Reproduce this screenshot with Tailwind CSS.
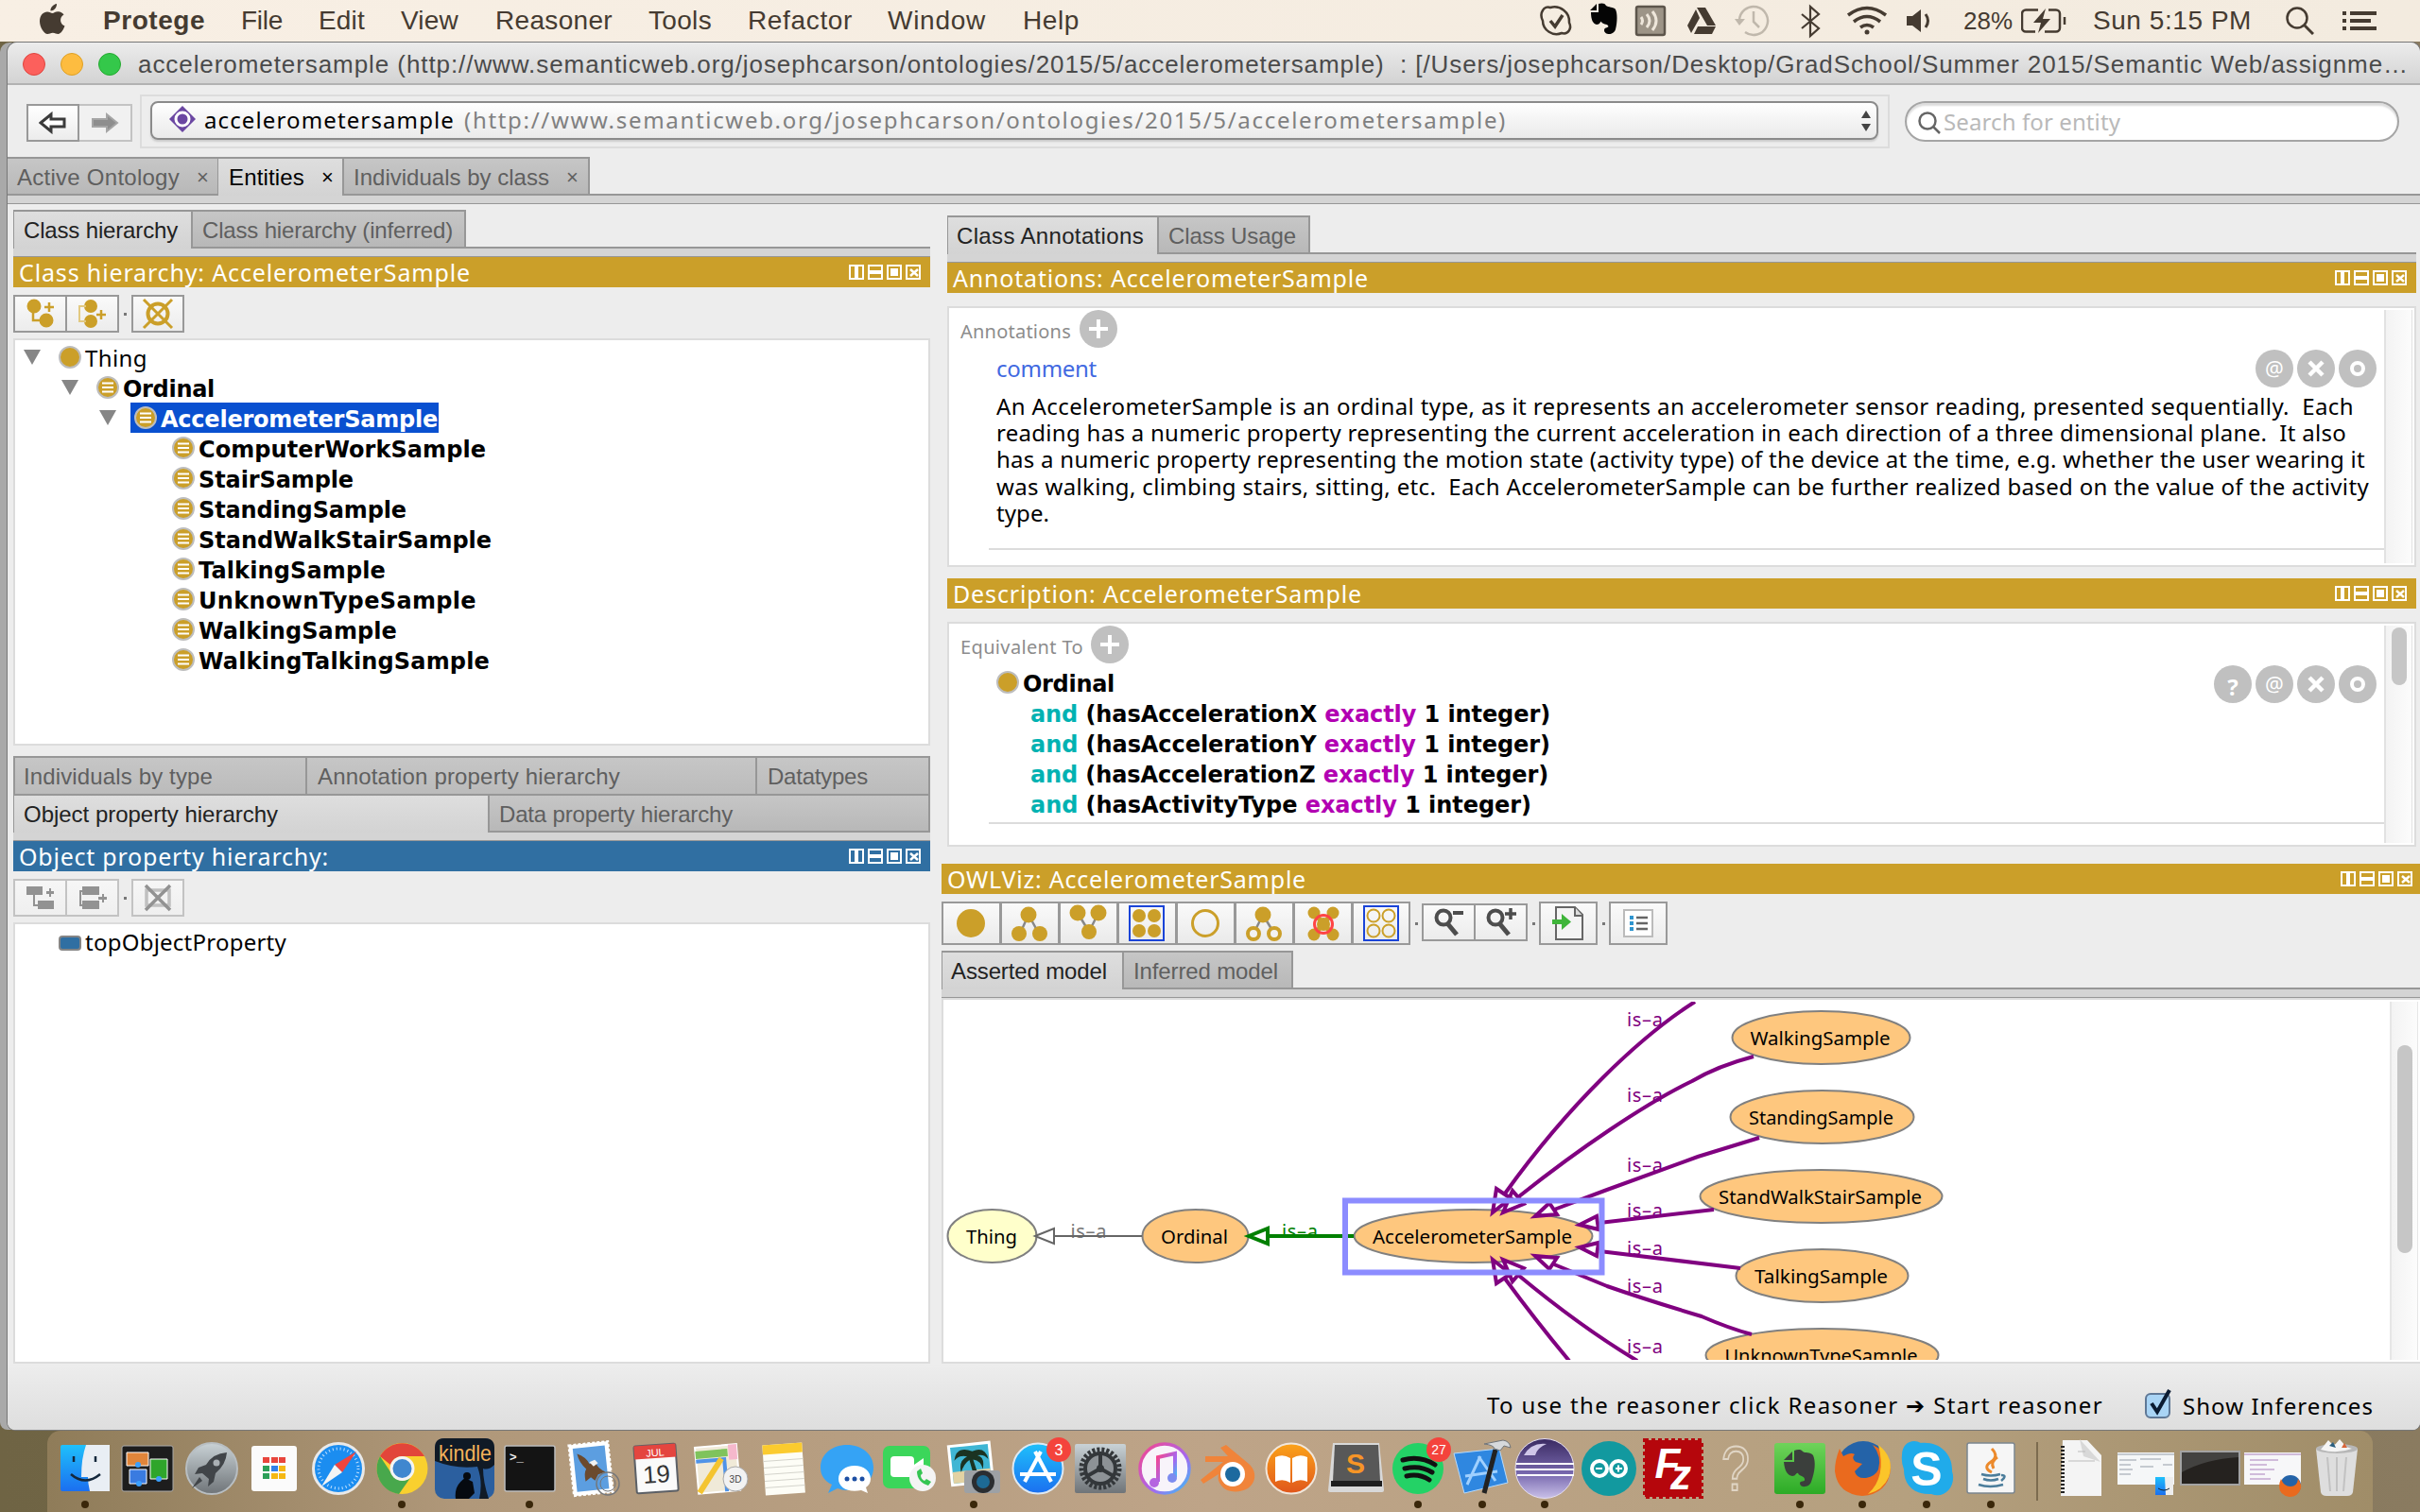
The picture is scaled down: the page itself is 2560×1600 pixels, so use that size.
<!DOCTYPE html>
<html lang="en">
<head>
<meta charset="utf-8">
<title>Protege</title>
<script src="https://cdn.jsdelivr.net/npm/@tailwindcss/browser@4"></script>
</head>
<body class="w-[2560px] h-[1600px] overflow-hidden bg-[#8d7f62] font-['Noto_Sans',sans-serif] text-[24px] text-black [&_span]:whitespace-pre">
<svg class="hidden">
  <symbol id="cls" viewBox="0 0 24 24"><circle cx="12" cy="12" r="11" fill="#cb9f29" stroke="#bdbdbd" stroke-width="2"/></symbol>
  <symbol id="def" viewBox="0 0 24 24"><circle cx="12" cy="12" r="11" fill="#cb9f29" stroke="#bdbdbd" stroke-width="2"/><path d="M6 7.500h12M6 12h12M6 16.500h12" stroke="#fff" stroke-width="2"/></symbol>
  <symbol id="arr" viewBox="0 0 18 16"><path d="M0 0h18L9 16z" fill="#868686"/></symbol>
  <symbol id="panelbtns" viewBox="0 0 76 16"><g fill="none" stroke="#fff" stroke-width="2"><path d="M1 1h14v14H1zM21 1h14v14H21zM41 1h14v14H41zM61 1h14v14H61z"/><path d="M8 1v14M21 8h14" stroke-width="4"/><path d="M65 5l8 7M73 5l-8 7" stroke-width="2.500"/></g><path d="M44 4h8v8h-8z" fill="#fff"/></symbol>
  <symbol id="plus" viewBox="0 0 40 40"><circle cx="20" cy="20" r="20" fill="#c0c0c0"/><path d="M20 10v20M10 20h20" stroke="#fff" stroke-width="4"/></symbol>
  <symbol id="xbtn" viewBox="0 0 40 40"><circle cx="20" cy="20" r="20" fill="#c0c0c0"/><path d="M13 13l14 14M27 13L13 27" stroke="#fff" stroke-width="4.500"/></symbol>
  <symbol id="obtn" viewBox="0 0 40 40"><circle cx="20" cy="20" r="20" fill="#c0c0c0"/><circle cx="20" cy="20" r="6" fill="none" stroke="#fff" stroke-width="4"/></symbol>
</svg>
<div class="flex flex-col w-[2560px] h-[1600px] bg-gradient-to-r from-[#6f6444] to-[#8a7b60]">

<!-- menu bar -->
<header class="h-[44px] shrink-0 flex items-center bg-gradient-to-r from-[#f8efe4] to-[#f3ebdf] text-[#453b31] font-['Liberation_Sans',sans-serif] text-[28px] leading-[44px]">
  <svg class="ml-[41px] w-[28px] h-[34px] -mt-[3px]" viewBox="0 0 28 34" fill="#453b31"><path d="M19 0c.3 4-3 7.500-6.500 7.500C12 4 15.500.5 19 0zM14.500 10c1.500 0 3-1.700 6-1.700 2.500 0 4.800 1.300 6 3.300-5 3-4.300 10 1 12-1.200 3.500-4 8.400-7 8.400-2.200 0-3-1.300-5.600-1.300-2.600 0-3.500 1.300-5.600 1.300C5.500 32 1 24.500 1 18.500c0-6.500 4-10 8-10 2.500 0 4 1.500 5.500 1.500z"/></svg>
  <div class="w-[186px] pl-[40px] font-bold"><span data-w="108">Protege</span></div>
  <div class="w-[82px]"><span data-w="44">File</span></div>
  <div class="w-[87px]"><span data-w="49">Edit</span></div>
  <div class="w-[100px]"><span data-w="61">View</span></div>
  <div class="w-[162px]"><span data-w="124">Reasoner</span></div>
  <div class="w-[105px]"><span data-w="67">Tools</span></div>
  <div class="w-[148px]"><span data-w="111">Refactor</span></div>
  <div class="w-[143px]"><span data-w="104">Window</span></div>
  <div class="w-[538px]"><span data-w="60">Help</span></div>
  <svg class="w-[430px] h-[44px]" viewBox="1620 0 430 44" fill="none" stroke="#453b31" stroke-width="2.500">
    <path d="M1632 11a6 6 0 0 1 8-3c10-3 21 5 20 16 3 6-1 13-8 11-9 4-20-3-20-13-2-4-2-8 0-11z"/><path d="M1640 22l5 6 8-12" stroke-width="3.500"/>
    <g fill="#050505" stroke="none"><path d="M1689 4l-7 7h7zM1691 4v9h-8c0 8 2 12 6 13 4 0 4-4 5-3 1 3 6 2 7 4 2 3-4 1-4 5 0 5 10 6 12-1 2-8 2-17 0-21-2-3-8-2-10-4-1-3-5-3-8-2z"/></g>
    <rect x="1731" y="7" width="30" height="30" rx="2" fill="#9d9487" stroke="#5d554b"/><g stroke="#eee6da" stroke-width="3"><path d="M1736 18q3 4 0 8M1742 15q6 7 0 14M1748 12q8 10 0 20"/></g>
    <g fill="#453b31" stroke="none"><path d="M1795 8h9l11 19h-9zM1794 10l4 9-9 16-4-8zM1796 28h19l-4 8h-19z"/></g>
    <g stroke="#c0b8ac"><path d="M1840 22a15 15 0 1 1 6 12M1855 12v11l6 6"/><path d="M1835 20h11l-6 7z" fill="#c0b8ac" stroke="none"/></g>
    <path d="M1906 15l18 15-9 8V7l9 8-18 15" stroke-width="2.200"/>
    <g stroke-width="3.500"><path d="M1955 16q20-15 40 0M1961 23q14-11 28 0M1968 29q7-5 14 0"/></g><circle cx="1975" cy="34" r="2.500" fill="#453b31" stroke="none"/>
    <path d="M2017 17h6l9-7v24l-9-7h-6z" fill="#453b31" stroke="none"/><path d="M2037 15q5 7 0 14" stroke-width="3"/>
  </svg>
  <div class="ml-[27px] w-[61px] text-[26px]"><span data-w="52">28%</span></div>
  <svg class="w-[48px] h-[26px]" viewBox="0 0 48 26" fill="none" stroke="#453b31" stroke-width="2.500"><path d="M18 1.500H5a4 4 0 0 0-4 4v15a4 4 0 0 0 4 4h10M29 1.500h8a4 4 0 0 1 4 4v15a4 4 0 0 1-4 4H25"/><path d="M26 0L13 15h8l-3 11 13-15h-8z" fill="#453b31" stroke="none"/><path d="M46 9v8"/></svg>
  <div class="ml-[28px] w-[204px]"><span data-w="168">Sun 5:15 PM</span></div>
  <svg class="w-[30px] h-[30px]" viewBox="0 0 30 30" fill="none" stroke="#453b31" stroke-width="2.500"><circle cx="12" cy="12" r="10.500"/><path d="M19 19l10 10" stroke-width="3"/></svg>
  <svg class="ml-[30px] w-[36px] h-[22px]" viewBox="0 0 36 22" fill="#453b31"><path d="M0 1h4v4H0zM8 1h28v4H8zM0 9h4v4H0zM8 9h22v4H8zM0 17h4v4H0zM8 17h28v4H8z"/></svg>
</header>

<!-- application window -->
<main class="ml-[8px] mt-px w-[2552px] h-[1468px] shrink-0 flex flex-col rounded-t-[10px] rounded-b-[8px] overflow-hidden bg-[#ededed] shadow-[0_0_0_1px_#777,-8px_0_0_#a9a9a9]">
  <div class="h-[45px] shrink-0 flex items-center bg-gradient-to-b from-[#ececec] to-[#d3d3d3] border-b-2 border-[#b2b2b2] font-['Liberation_Sans',sans-serif] text-[26px] text-[#4a4a4a]">
    <div class="ml-[16px] flex gap-[16px] mt-[2px]"><div class="size-[24px] rounded-full bg-[#fc605c] border border-[#e0443e]"></div><div class="size-[24px] rounded-full bg-[#fdbc40] border border-[#dfa023]"></div><div class="size-[24px] rounded-full bg-[#34c84a] border border-[#24a92f]"></div></div>
    <div class="ml-[18px] pt-[4px]"><span data-w="2402">accelerometersample (http://www.semanticweb.org/josephcarson/ontologies/2015/5/accelerometersample)  : [/Users/josephcarson/Desktop/GradSchool/Summer 2015/Semantic Web/assignme…</span></div>
  </div>

  <div class="h-[76px] shrink-0 flex items-start pt-[10px]">
    <div class="ml-[20px] mt-[10px] flex">
      <div class="w-[56px] h-[40px] border-2 border-[#999] bg-gradient-to-b from-[#fff] to-[#ececec] flex items-center justify-center"><svg class="w-[30px] h-[24px]" viewBox="0 0 30 24" fill="#fff" stroke="#3b3b3b" stroke-width="3"><path d="M2 12L13 3v5h14v8H13v5z"/></svg></div>
      <div class="w-[56px] h-[40px] border-2 border-l-0 border-[#c3c3c3] bg-[#f1f1f1] flex items-center justify-center"><svg class="w-[30px] h-[24px]" viewBox="0 0 30 24" fill="#8e8e8e" stroke="#a5a5a5" stroke-width="2"><path d="M28 12L17 3v5H2v8h15v5z"/></svg></div>
    </div>
    <div class="ml-[8px] w-[1851px] h-[57px] border-2 border-[#dcdcdc] pl-[9px] pt-[5px]">
      <div class="w-[1828px] h-[41px] rounded-[8px] border-2 border-[#8b8b8b] bg-gradient-to-b from-white via-[#f4f4f4] to-[#ebebeb] shadow-[0_2px_2px_#ccc] flex items-center leading-[36px]">
        <svg class="ml-[18px] w-[28px] h-[28px] mr-[9px] -mt-[3px]" viewBox="0 0 28 28"><path d="M14 0l14 14-14 14L0 14z" fill="#6b47a2"/><circle cx="14" cy="14" r="7" fill="#6b47a2" stroke="#fff" stroke-width="3"/></svg>
        <div class="w-[275px] -mt-[2px]"><span data-w="265">accelerometersample</span></div>
        <div class="w-[1477px] -mt-[2px] text-[#808080]"><span data-w="1103">(http://www.semanticweb.org/josephcarson/ontologies/2015/5/accelerometersample)</span></div>
        <svg class="w-[12px] h-[22px]" viewBox="0 0 12 22" fill="#444"><path d="M6 0l5 8H1zM6 22l5-8H1z"/></svg>
      </div>
    </div>
    <div class="ml-[16px] mt-[7px] w-[523px] h-[43px] rounded-full border-2 border-[#a5a5a5] bg-white shadow-[inset_0_3px_2px_#ddd] flex items-center text-[#b9b9b9] leading-[39px]">
      <svg class="ml-[12px] mr-[3px] mt-[2px] w-[24px] h-[24px]" viewBox="0 0 24 24" fill="none" stroke="#666" stroke-width="2.500"><circle cx="10" cy="10" r="8.500"/><path d="M16 16l7 7"/></svg><span data-w="187">Search for entity</span>
    </div>
  </div>

  <!-- main tabs -->
  <div class="h-[39px] shrink-0 flex font-['Liberation_Sans',sans-serif] text-[#5f5f5f] leading-[39px]">
    <div class="relative w-[223px] h-[41px] border-2 border-l-0 border-r border-[#979797] bg-gradient-to-b from-[#c6c6c6] to-[#b8b8b8] pl-[10px] flex"><div class="w-[190px]"><span data-w="172">Active Ontology</span></div><span class="text-[22px]">×</span></div>
    <div class="relative w-[131px] h-[41px] border-t-2 border-[#979797] bg-gradient-to-b from-[#dedede] to-[#d3d3d3] text-black pl-[11px] flex"><div class="w-[98px]"><span data-w="80">Entities</span></div><span class="text-[22px]">×</span></div>
    <div class="relative w-[262px] h-[41px] border-2 border-[#979797] bg-gradient-to-b from-[#c6c6c6] to-[#b8b8b8] pl-[10px] flex"><div class="w-[225px]"><span data-w="207">Individuals by class</span></div><span class="text-[22px]">×</span></div>
  </div>
  <div class="h-[11px] shrink-0 border-t-2 border-b border-[#979797] bg-[#d4d4d4]"></div>

  <div class="h-[1227px] shrink-0 flex">
    <!-- left column -->
    <div class="ml-[6px] w-[970px] mt-[6px] flex flex-col">
      <div class="h-[39px] shrink-0 flex font-['Liberation_Sans',sans-serif] text-[#5f5f5f] leading-[39px]">
        <div class="relative w-[188px] h-[41px] border-t-2 border-l border-[#979797] bg-gradient-to-b from-[#dedede] to-[#d3d3d3] text-[#222] pl-[10px]"><span data-w="163">Class hierarchy</span></div>
        <div class="relative w-[291px] h-[41px] border-2 border-[#979797] bg-gradient-to-b from-[#c6c6c6] to-[#b8b8b8] pl-[10px]"><span data-w="265">Class hierarchy (inferred)</span></div>
      </div>
      <div class="h-[11px] shrink-0 border-t-2 border-b border-[#979797] bg-[#d4d4d4]"></div>
      <div class="h-[32px] shrink-0 bg-[#cb9f29] flex items-center justify-between pl-[6px] pr-[10px] text-[25px] text-white leading-[32px]"><span data-w="478">Class hierarchy: AccelerometerSample</span><svg class="w-[76px] h-[16px]"><use href="#panelbtns"/></svg></div>
      <div class="mt-[8px] h-[40px] shrink-0 flex items-center">
        <div class="w-[57px] h-[40px] border-2 border-[#999] bg-gradient-to-b from-[#fafafa] to-[#ececec] flex items-center justify-center"><svg class="w-[32px] h-[32px]" viewBox="0 0 32 32" fill="#cb9f29" stroke="#cb9f29" stroke-width="2"><circle cx="9" cy="8" r="6.500"/><circle cx="22" cy="23" r="6.500"/><path d="M8 8v15h12M25 4v10M20 9h10" fill="none" stroke-width="2.500"/></svg></div>
        <div class="w-[55px] h-[40px] border-2 border-l-0 border-[#999] bg-gradient-to-b from-[#fafafa] to-[#ececec] flex items-center justify-center"><svg class="w-[32px] h-[32px]" viewBox="0 0 32 32" fill="#cb9f29" stroke="#cb9f29" stroke-width="2"><circle cx="14" cy="8" r="6"/><circle cx="14" cy="24" r="6"/><path d="M9 8H2v16h7" fill="none" stroke="#e2c981"/><path d="M25 12v10M20 17h10" fill="none" stroke-width="2.500"/></svg></div>
        <div class="size-[3px] mx-[5px] bg-[#777]"></div>
        <div class="w-[56px] h-[40px] border-2 border-[#999] bg-gradient-to-b from-[#fafafa] to-[#ececec] flex items-center justify-center"><svg class="w-[34px] h-[34px]" viewBox="0 0 34 34" fill="none" stroke="#cb9f29" stroke-width="3"><circle cx="17" cy="17" r="10.500" stroke-width="4"/><path d="M2 2l30 30M32 2L2 32"/></svg></div>
      </div>
      <div class="mt-[6px] h-[431px] shrink-0 border-2 border-[#dcdcdc] bg-white pt-[2px] pl-[9px] flex flex-col font-['DejaVu_Sans',sans-serif] font-bold leading-[32px] [&_span]:pt-[3px]">
        <div class="h-[32px] flex items-center font-['Noto_Sans',sans-serif] font-normal"><svg class="w-[18px] h-[16px] mr-[19px]"><use href="#arr"/></svg><svg class="size-[24px] mr-[4px]"><use href="#cls"/></svg><span data-w="66" class="pt-px!">Thing</span></div>
        <div class="h-[32px] pl-[40px] flex items-center"><svg class="w-[18px] h-[16px] mr-[19px]"><use href="#arr"/></svg><svg class="size-[24px] mr-[4px]"><use href="#def"/></svg><span data-w="97">Ordinal</span></div>
        <div class="h-[32px] pl-[80px] flex items-center"><svg class="w-[18px] h-[16px] mr-[15px]"><use href="#arr"/></svg><div class="h-[32px] w-[326px] pl-[4px] flex items-center bg-[#0950d0] text-white"><svg class="size-[24px] mr-[4px] shrink-0"><use href="#def"/></svg><span data-w="293">AccelerometerSample</span></div></div>
        <div class="h-[32px] pl-[157px] flex items-center"><svg class="size-[24px] mr-[4px]"><use href="#def"/></svg><span data-w="304">ComputerWorkSample</span></div>
        <div class="h-[32px] pl-[157px] flex items-center"><svg class="size-[24px] mr-[4px]"><use href="#def"/></svg><span data-w="164">StairSample</span></div>
        <div class="h-[32px] pl-[157px] flex items-center"><svg class="size-[24px] mr-[4px]"><use href="#def"/></svg><span data-w="220">StandingSample</span></div>
        <div class="h-[32px] pl-[157px] flex items-center"><svg class="size-[24px] mr-[4px]"><use href="#def"/></svg><span data-w="310">StandWalkStairSample</span></div>
        <div class="h-[32px] pl-[157px] flex items-center"><svg class="size-[24px] mr-[4px]"><use href="#def"/></svg><span data-w="198">TalkingSample</span></div>
        <div class="h-[32px] pl-[157px] flex items-center"><svg class="size-[24px] mr-[4px]"><use href="#def"/></svg><span data-w="294">UnknownTypeSample</span></div>
        <div class="h-[32px] pl-[157px] flex items-center"><svg class="size-[24px] mr-[4px]"><use href="#def"/></svg><span data-w="210">WalkingSample</span></div>
        <div class="h-[32px] pl-[157px] flex items-center"><svg class="size-[24px] mr-[4px]"><use href="#def"/></svg><span data-w="308">WalkingTalkingSample</span></div>
      </div>
      <div class="mt-[11px] h-[40px] shrink-0 flex border-2 border-b-0 border-[#979797] bg-gradient-to-b from-[#c6c6c6] to-[#bbb] font-['Liberation_Sans',sans-serif] text-[#5f5f5f] leading-[40px]">
        <div class="w-[309px] pl-[9px] border-r-2 border-[#979797]"><span data-w="200">Individuals by type</span></div>
        <div class="w-[476px] pl-[11px] border-r-2 border-[#979797]"><span data-w="320">Annotation property hierarchy</span></div>
        <div class="pl-[11px]"><span data-w="106">Datatypes</span></div>
      </div>
      <div class="h-[39px] shrink-0 flex font-['Liberation_Sans',sans-serif] text-[#5f5f5f] leading-[39px]">
        <div class="relative w-[502px] h-[41px] border-t-2 border-l border-[#979797] bg-gradient-to-b from-[#dedede] to-[#d3d3d3] text-[#222] pl-[10px]"><span data-w="269">Object property hierarchy</span></div>
        <div class="relative flex-1 h-[41px] border-2 border-[#979797] bg-gradient-to-b from-[#c6c6c6] to-[#b8b8b8] pl-[10px]"><span data-w="247">Data property hierarchy</span></div>
      </div>
      <div class="h-[11px] shrink-0 border-b border-[#979797] bg-[#d4d4d4]"></div>
      <div class="h-[32px] shrink-0 bg-[#306fa2] flex items-center justify-between pl-[6px] pr-[10px] text-[25px] text-white leading-[32px]"><span data-w="328">Object property hierarchy:</span><svg class="w-[76px] h-[16px]"><use href="#panelbtns"/></svg></div>
      <div class="mt-[8px] h-[40px] shrink-0 flex items-center">
        <div class="w-[57px] h-[40px] border-2 border-[#c3c3c3] bg-gradient-to-b from-[#f6f6f6] to-[#efefef] flex items-center justify-center"><svg class="w-[32px] h-[32px]" viewBox="0 0 32 32" fill="#929292"><path d="M1 4h17v9H1zM13 19h17v9H13zM8 13h2v10h3v2H8zM25 6h2v9h-2zM22 9h8v3h-8z"/></svg></div>
        <div class="w-[55px] h-[40px] border-2 border-l-0 border-[#c3c3c3] bg-gradient-to-b from-[#f6f6f6] to-[#efefef] flex items-center justify-center"><svg class="w-[32px] h-[32px]" viewBox="0 0 32 32" fill="#929292"><path d="M5 4h18v9H5zM5 19h18v9H5zM2 8h3v2H4v13h1v2H2zM26 12h2v9h-2zM22 15h9v3h-9z"/></svg></div>
        <div class="size-[3px] mx-[5px] bg-[#777]"></div>
        <div class="w-[56px] h-[40px] border-2 border-[#c3c3c3] bg-gradient-to-b from-[#f6f6f6] to-[#efefef] flex items-center justify-center"><svg class="w-[32px] h-[32px]" viewBox="0 0 32 32" fill="none" stroke="#929292" stroke-width="3.500"><path d="M4 8h24v16H4z" stroke="#c0c0c0"/><path d="M3 3l26 26M29 3L3 29"/></svg></div>
      </div>
      <div class="mt-[6px] flex-1 border-2 border-[#dcdcdc] bg-white pt-[1px] pl-[46px]"><div class="h-[36px] flex items-center leading-[36px]"><div class="w-[24px] h-[16px] mt-px mr-[4px] rounded-[4px] border-2 border-[#858585] bg-[#306fa2]"></div><span data-w="213">topObjectProperty</span></div></div>
    </div>

    <!-- right column -->
    <div class="ml-[12px] flex-1 flex flex-col">
      <div class="ml-[6px] mr-[4px] mt-[12px] flex flex-col shrink-0">
        <div class="h-[39px] flex font-['Liberation_Sans',sans-serif] text-[#5f5f5f] leading-[39px]">
          <div class="relative w-[222px] h-[41px] border-t-2 border-l border-[#979797] bg-gradient-to-b from-[#dedede] to-[#d3d3d3] text-[#222] pl-[9px]"><span data-w="198">Class Annotations</span></div>
          <div class="relative w-[162px] h-[41px] border-2 border-[#979797] bg-gradient-to-b from-[#c6c6c6] to-[#b8b8b8] pl-[10px]"><span data-w="135">Class Usage</span></div>
        </div>
        <div class="h-[11px] border-t-2 border-b border-[#979797] bg-[#d4d4d4]"></div>
        <div class="h-[32px] bg-[#cb9f29] flex items-center justify-between pl-[6px] pr-[10px] text-[25px] text-white leading-[32px]"><span data-w="440">Annotations: AccelerometerSample</span><svg class="w-[76px] h-[16px]"><use href="#panelbtns"/></svg></div>
        <div class="mt-[14px] h-[276px] border-2 border-[#dcdcdc] bg-white flex pt-[2px] pb-[2px] pr-[2px]">
          <div class="w-[1518px] flex flex-col pl-[12px]">
            <div class="h-[40px] flex items-center text-[20px] text-[#8c8c8c]"><div class="mt-[6px] w-[126px]"><span data-w="117">Annotations</span></div><svg class="size-[40px]"><use href="#plus"/></svg></div>
            <div class="ml-[38px] mr-[8px] mt-[2px] h-[40px] flex items-center text-[#4169e1]"><span data-w="106">comment</span><div class="ml-auto flex gap-[4px]"><svg class="size-[40px]" viewBox="0 0 40 40"><circle cx="20" cy="20" r="20" fill="#c0c0c0"/><text x="20" y="28" font-size="22" fill="#fff" text-anchor="middle">@</text></svg><svg class="size-[40px]"><use href="#xbtn"/></svg><svg class="size-[40px]"><use href="#obtn"/></svg></div></div>
            <div class="ml-[38px] mt-[6px] h-[142px] flex flex-col leading-[28px] gap-[0.200px]"><div><span data-w="1436">An AccelerometerSample is an ordinal type, as it represents an accelerometer sensor reading, presented sequentially.  Each</span></div><div><span data-w="1428">reading has a numeric property representing the current acceleration in each direction of a three dimensional plane.  It also</span></div><div><span data-w="1448">has a numeric property representing the motion state (activity type) of the device at the time, e.g. whether the user wearing it</span></div><div><span data-w="1452">was walking, climbing stairs, sitting, etc.  Each AccelerometerSample can be further realized based on the value of the activity</span></div><div><span data-w="56">type.</span></div></div>
            <div class="ml-[30px] mt-[22px] h-[2px] bg-[#dcdcdc]"></div>
          </div>
          <div class="flex-1 border-l-2 border-r border-[#e2e2e2] bg-gradient-to-r from-[#f3f3f3] to-[#fcfcfc]"></div>
        </div>
        <div class="mt-[12px] h-[32px] bg-[#cb9f29] flex items-center justify-between pl-[6px] pr-[10px] text-[25px] text-white leading-[32px]"><span data-w="433">Description: AccelerometerSample</span><svg class="w-[76px] h-[16px]"><use href="#panelbtns"/></svg></div>
        <div class="mt-[14px] h-[238px] border-2 border-[#dcdcdc] bg-white flex pt-[2px] pb-[2px] pr-[2px]">
          <div class="w-[1518px] flex pl-[12px]">
            <div class="flex-1 flex flex-col">
              <div class="h-[40px] flex items-center text-[20px] text-[#8c8c8c]"><div class="mt-[6px] w-[138px]"><span data-w="130">Equivalent To</span></div><svg class="size-[40px]"><use href="#plus"/></svg></div>
              <div class="ml-[38px] mr-[8px] mt-[2px] h-[160px] flex justify-between">
                <div class="pt-[4px] font-['DejaVu_Sans',sans-serif] font-bold leading-[32px]">
                  <div class="flex items-center h-[32px]"><svg class="size-[24px] mr-[4px] -mt-[4px]"><use href="#cls"/></svg><span data-w="97">Ordinal</span></div>
                  <div class="pl-[36px] h-[32px]"><span data-w="550"><span class="text-[#00b2b2]">and</span> (hasAccelerationX <span class="text-[#b200b2]">exactly</span> 1 integer)</span></div>
                  <div class="pl-[36px] h-[32px]"><span data-w="550"><span class="text-[#00b2b2]">and</span> (hasAccelerationY <span class="text-[#b200b2]">exactly</span> 1 integer)</span></div>
                  <div class="pl-[36px] h-[32px]"><span data-w="548"><span class="text-[#00b2b2]">and</span> (hasAccelerationZ <span class="text-[#b200b2]">exactly</span> 1 integer)</span></div>
                  <div class="pl-[36px] h-[32px]"><span data-w="530"><span class="text-[#00b2b2]">and</span> (hasActivityType <span class="text-[#b200b2]">exactly</span> 1 integer)</span></div>
                </div>
                <div class="flex gap-[4px]"><svg class="size-[40px]" viewBox="0 0 40 40"><circle cx="20" cy="20" r="20" fill="#c0c0c0"/><text x="20" y="32" font-size="24" font-weight="bold" fill="#fff" text-anchor="middle">?</text></svg><svg class="size-[40px]" viewBox="0 0 40 40"><circle cx="20" cy="20" r="20" fill="#c0c0c0"/><text x="20" y="28" font-size="22" fill="#fff" text-anchor="middle">@</text></svg><svg class="size-[40px]"><use href="#xbtn"/></svg><svg class="size-[40px]"><use href="#obtn"/></svg></div>
              </div>
              <div class="ml-[30px] mt-[6px] h-[2px] bg-[#dcdcdc]"></div>
            </div>
          </div>
          <div class="flex-1 border-l-2 border-r border-[#e2e2e2] bg-gradient-to-r from-[#f3f3f3] to-[#fcfcfc] pl-[6px] pt-[2px]"><div class="w-[16px] h-[61px] rounded-full bg-[#c6c6c6]"></div></div>
        </div>
      </div>

      <div class="mt-[18px] h-[32px] shrink-0 bg-[#cb9f29] flex items-center justify-between pl-[6px] pr-[8px] text-[25px] text-white leading-[32px]"><span data-w="380">OWLViz: AccelerometerSample</span><svg class="w-[76px] h-[16px]"><use href="#panelbtns"/></svg></div>
      <div class="mt-[8px] h-[46px] shrink-0 flex items-center">
        <div class="h-[46px] w-[496px] flex border-2 border-[#999] bg-gradient-to-b from-[#fafafa] to-[#eaeaea]">
          <svg class="w-[492px] h-[42px]" viewBox="998 956 492 42">
            <g fill="none" stroke="#999" stroke-width="3"><path d="M1058.500 956v42M1120.500 956v42M1182.500 956v42M1244.500 956v42M1306.500 956v42M1368.500 956v42M1430.500 956v42"/></g>
            <g fill="none" stroke="#888" stroke-width="2.500"><path d="M1088 968l-9 20M1088 968l11 20M1140 966l12 20M1162 966l-10 20M1336 968l-10 20M1336 968l12 20"/></g>
            <g fill="#cb9f29"><circle cx="1027" cy="977" r="15"/><circle cx="1088" cy="968" r="8.500"/><circle cx="1078" cy="988" r="8"/><circle cx="1100" cy="988" r="8"/><circle cx="1140" cy="966" r="8.500"/><circle cx="1162" cy="966" r="8.500"/><circle cx="1152" cy="986" r="8"/><circle cx="1205" cy="969" r="7"/><circle cx="1221" cy="969" r="7"/><circle cx="1205" cy="985" r="7"/><circle cx="1221" cy="985" r="7"/><circle cx="1336" cy="968" r="8.500"/><circle cx="1390" cy="966" r="6.500"/><circle cx="1410" cy="966" r="6.500"/><circle cx="1390" cy="989" r="6.500"/><circle cx="1410" cy="989" r="6.500"/><circle cx="1400" cy="978" r="7"/></g>
            <path d="M1390 966l20 23M1410 966l-20 23" stroke="#cb9f29" stroke-width="5"/><circle cx="1400" cy="978" r="9.500" fill="none" stroke="#f44" stroke-width="3"/>
            <g fill="none" stroke="#cb9f29" stroke-width="3"><circle cx="1275" cy="977" r="13.500"/><circle cx="1326" cy="988" r="6" fill="#f2f2f2" stroke-width="4"/><circle cx="1348" cy="988" r="6" fill="#f2f2f2" stroke-width="4"/><g stroke-width="2"><circle cx="1453" cy="969" r="6.500"/><circle cx="1469" cy="969" r="6.500"/><circle cx="1453" cy="985" r="6.500"/><circle cx="1469" cy="985" r="6.500"/></g></g>
            <g fill="none" stroke="#1a44d8" stroke-width="2"><path d="M1195 959h36v36h-36zM1443 959h36v36h-36z"/></g>
          </svg>
        </div>
        <div class="size-[3px] ml-[5px] mr-[4px] bg-[#777]"></div>
        <div class="w-[57px] h-[40px] -mt-[2px] border-2 border-[#999] bg-gradient-to-b from-[#fafafa] to-[#ececec] flex items-center justify-center"><svg class="w-[32px] h-[32px]" viewBox="0 0 32 32" fill="none" stroke="#4d4d4d" stroke-width="4"><circle cx="10" cy="11" r="7.500"/><path d="M14 17l10 12" stroke-width="5"/><path d="M20 6h11"/></svg></div>
        <div class="w-[55px] h-[40px] -mt-[2px] border-2 border-l-0 border-[#999] bg-gradient-to-b from-[#fafafa] to-[#ececec] flex items-center justify-center"><svg class="w-[32px] h-[32px]" viewBox="0 0 32 32" fill="none" stroke="#4d4d4d" stroke-width="4"><circle cx="10" cy="11" r="7.500"/><path d="M14 17l10 12" stroke-width="5"/><path d="M20 7h12M26 1v12" stroke-width="3.500"/></svg></div>
        <div class="size-[3px] ml-[5px] mr-[4px] bg-[#777]"></div>
        <div class="w-[62px] h-[46px] border-2 border-[#999] bg-gradient-to-b from-[#fafafa] to-[#ececec] flex items-center justify-center"><svg class="w-[34px] h-[36px]" viewBox="0 0 34 36"><path d="M4 1h20l8 8v26H4z" fill="#f4f4f4" stroke="#666" stroke-width="2"/><path d="M24 1v9h8" fill="#ddd" stroke="#666" stroke-width="2"/><path d="M0 14h10V8l10 8.500L10 25v-6H0z" fill="#3fb53a"/></svg></div>
        <div class="size-[3px] ml-[5px] mr-[4px] bg-[#777]"></div>
        <div class="w-[62px] h-[46px] border-2 border-[#999] bg-gradient-to-b from-[#fafafa] to-[#ececec] flex items-center justify-center"><svg class="w-[32px] h-[30px]" viewBox="0 0 32 30"><path d="M1 1h30v28H1z" fill="#fff" stroke="#bbb" stroke-width="2"/><path d="M14 9h12M14 15h12M14 21h12" stroke="#666" stroke-width="2.500"/><path d="M7 9h4M7 15h4M7 21h4" stroke="#2f95cf" stroke-width="4"/></svg></div>
      </div>
      <div class="mt-[6px] h-[39px] shrink-0 flex font-['Liberation_Sans',sans-serif] text-[#5f5f5f] leading-[39px]">
        <div class="relative w-[191px] h-[41px] border-t-2 border-l border-[#979797] bg-gradient-to-b from-[#dedede] to-[#d3d3d3] text-[#222] pl-[9px]"><span data-w="165">Asserted model</span></div>
        <div class="relative w-[181px] h-[41px] border-2 border-[#979797] bg-gradient-to-b from-[#c6c6c6] to-[#b8b8b8] pl-[10px]"><span data-w="153">Inferred model</span></div>
      </div>
      <div class="h-[11px] shrink-0 border-t-2 border-b border-[#979797] bg-[#d4d4d4]"></div>
      <div class="flex-1 border-2 border-r-0 border-[#dcdcdc] bg-white flex py-[2px]">
        <svg class="w-[1530px] h-[379px]" viewBox="998 1060 1530 379" font-size="20" text-anchor="middle">
          <g stroke="#808080" stroke-width="2" fill="#fec77e">
            <ellipse cx="1049.500" cy="1308" rx="47" ry="28" fill="#ffffcb"/><ellipse cx="1264.500" cy="1308" rx="56" ry="28"/><ellipse cx="1558.500" cy="1308" rx="126" ry="28"/>
            <ellipse cx="1926.500" cy="1098" rx="94" ry="28"/><ellipse cx="1927.500" cy="1182" rx="97" ry="28"/><ellipse cx="1926.500" cy="1266" rx="128" ry="28"/><ellipse cx="1927.500" cy="1350" rx="91" ry="28"/><ellipse cx="1927.500" cy="1434" rx="123" ry="28"/>
          </g>
          <g>
            <text x="1049" y="1316" textLength="54" lengthAdjust="spacingAndGlyphs">Thing</text><text x="1263.500" y="1316" textLength="71" lengthAdjust="spacingAndGlyphs">Ordinal</text><text x="1557.500" y="1316" textLength="211" lengthAdjust="spacingAndGlyphs">AccelerometerSample</text>
            <text x="1925.500" y="1106" textLength="148" lengthAdjust="spacingAndGlyphs">WalkingSample</text><text x="1926.500" y="1190" textLength="153" lengthAdjust="spacingAndGlyphs">StandingSample</text><text x="1925.500" y="1274" textLength="215" lengthAdjust="spacingAndGlyphs">StandWalkStairSample</text><text x="1926.500" y="1358" textLength="141" lengthAdjust="spacingAndGlyphs">TalkingSample</text><text x="1926.500" y="1442" textLength="204" lengthAdjust="spacingAndGlyphs">UnknownTypeSample</text>
          </g>
          <g fill="#777"><text x="1151.500" y="1310" textLength="38">is–a</text></g>
          <g fill="#008000"><text x="1375" y="1310" textLength="38">is–a</text></g>
          <g fill="#800080"><text x="1740" y="1086" textLength="38">is–a</text><text x="1740" y="1166" textLength="38">is–a</text><text x="1740" y="1240" textLength="38">is–a</text><text x="1740" y="1288" textLength="38">is–a</text><text x="1740" y="1328" textLength="38">is–a</text><text x="1740" y="1368" textLength="38">is–a</text><text x="1740" y="1432" textLength="38">is–a</text></g>
          <g fill="none" stroke="#666" stroke-width="2"><path d="M1115 1308h93M1095 1308l20-8v16z"/></g>
          <g fill="none" stroke="#008000" stroke-width="4"><path d="M1342 1308h90M1321 1308l20-8v16z"/></g>
          <g fill="none" stroke="#800080" stroke-width="4">
            <path d="M1793 1060C1735 1097 1660 1168 1592 1263M1855 1118Q1817 1128 1790 1144C1740 1168 1670 1216 1607 1266M1861 1204L1796 1224 1700 1259 1644 1280M1813 1280L1692 1294M1841 1342L1692 1324M1853 1412Q1830 1406 1800 1393 1740 1375 1700 1361L1644 1338M1732 1440Q1672 1404 1607 1350M1660 1440Q1625 1398 1592 1353"/>
            <path d="M1579 1283l4-25 15 10zM1590 1283l10-23 12 14zM1624 1287l15-14 8 12zM1671 1296l18-9 2 14z"/>
            <path d="M1579 1333l4 25 15-10zM1590 1333l10 23 12-14zM1624 1329l15 14 8-12zM1671 1320l18 9 2-14z"/>
          </g>
          <path d="M1423 1270.500h271.500v76H1423z" fill="none" stroke="#8c8cff" stroke-width="6"/>
        </svg>
        <div class="flex-1 mr-[2px] border-l-2 border-r border-[#e6e6e6] bg-gradient-to-r from-[#f3f3f3] to-[#fcfcfc] pl-[6px] pt-[46px]"><div class="w-[16px] h-[220px] rounded-full bg-[#c6c6c6]"></div></div>
      </div>
    </div>
  </div>

  <!-- status bar -->
  <footer class="flex-1 flex items-center bg-gradient-to-b from-[#ededed] to-[#dedede] pt-[18px] leading-[40px]">
    <div class="ml-[1565px] w-[696px] shrink-0"><span data-w="652">To use the reasoner click Reasoner ➔ Start reasoner</span></div>
    <svg class="w-[30px] h-[36px] mr-[10px] -mt-[5px] shrink-0" viewBox="0 0 30 36"><rect x="1" y="8" width="25" height="25" rx="5" fill="#a9d4f5" stroke="#5f7896" stroke-width="2"/><path d="M7 18l6 9L26 4" fill="none" stroke="#0b1c33" stroke-width="4"/></svg>
    <span data-w="202" class="mt-[2px]">Show Inferences</span>
  </footer>
</main>

<!-- dock -->
<nav class="ml-[50px] mt-px w-[2460px] h-[86px] shrink-0 rounded-t-[14px] overflow-hidden bg-[linear-gradient(90deg,#8f7c59,#b0987a_18%,#bea488_50%,#b5a07f_80%,#a08d68)] font-['Liberation_Sans',sans-serif]">
  <svg class="w-[2460px] h-[86px]" viewBox="50 1514 2460 86">
    <defs>
      <linearGradient id="blue" x2="0" y2="1"><stop stop-color="#1fc0fb"/><stop offset="1" stop-color="#1b6ff0"/></linearGradient>
      <linearGradient id="gray" x2="0" y2="1"><stop stop-color="#c9d2d6"/><stop offset="1" stop-color="#6f7478"/></linearGradient>
      <linearGradient id="ecl" x2="0" y2="1"><stop stop-color="#3a2a62"/><stop offset=".6" stop-color="#7a6bb0"/><stop offset="1" stop-color="#c9c0e8"/></linearGradient>
      <linearGradient id="org" x2="0" y2="1"><stop stop-color="#fba31a"/><stop offset="1" stop-color="#e0561b"/></linearGradient>
      <linearGradient id="itu" x2="1" y2="1"><stop stop-color="#f8448b"/><stop offset=".6" stop-color="#a568f0"/><stop offset="1" stop-color="#35c5f5"/></linearGradient>
      <linearGradient id="grn" x2="0" y2="1"><stop stop-color="#6fd35a"/><stop offset="1" stop-color="#2cab26"/></linearGradient>
    </defs>
    <g fill="#3a270a"><circle cx="90" cy="1592" r="4"/><circle cx="425" cy="1592" r="4"/><circle cx="560" cy="1592" r="4"/><circle cx="1030" cy="1592" r="4"/><circle cx="1500" cy="1592" r="4"/><circle cx="1568" cy="1592" r="4"/><circle cx="1634" cy="1592" r="4"/><circle cx="1904" cy="1592" r="4"/><circle cx="1970" cy="1592" r="4"/><circle cx="2038" cy="1592" r="4"/><circle cx="2106" cy="1592" r="4"/></g>
    <!-- Finder -->
    <rect x="64" y="1529" width="52" height="49" rx="2" fill="url(#blue)"/><path d="M91 1529h25v49H95q-2-8-2-15h-7q0-20 5-34z" fill="#e9eef4"/><path d="M78 1541v6M101 1541v6M75 1560q15 13 31 0" fill="none" stroke="#14283c" stroke-width="2.500"/>
    <!-- Mission control -->
    <rect x="129" y="1530" width="54" height="48" rx="2" fill="#1d1d1d" stroke="#aaa"/><path d="M134 1537h23v14h-23z" fill="#e0853a" stroke="#fff"/><path d="M159 1544h18v21h-18z" fill="#2fa52b" stroke="#fff"/><path d="M137 1555h18v15h-18z" fill="#3a7be0" stroke="#fff"/><circle cx="146" cy="1550" r="3" fill="#3aa0ff"/><circle cx="168" cy="1565" r="3" fill="#3aa0ff"/><circle cx="147" cy="1570" r="3" fill="#3aa0ff"/>
    <!-- Launchpad -->
    <circle cx="224" cy="1554" r="27" fill="url(#gray)" stroke="#b8bec2" stroke-width="2"/><path d="M240 1537q-15 1-22 13l-8 3-4 7 8-1 7 6-1 8 6-5 2-9q11-9 12-22zM211 1563l-8 12 11-8z" fill="#414549"/><circle cx="229" cy="1548" r="3.500" fill="#aab0b4"/>
    <!-- App grid -->
    <rect x="266" y="1530" width="48" height="48" rx="3" fill="#fbfbfb"/><g><path d="M278 1542h7v6h-7zM287 1542h7v6h-7zM295 1542h7v6h-7z" fill="#e8453c"/><path d="M278 1551h7v6h-7zM278 1559h7v6h-7z" fill="#2c9f58"/><path d="M287 1551h7v6h-7z" fill="#3180e8"/><path d="M295 1551h7v6h-7zM287 1559h7v6h-7zM295 1559h7v6h-7z" fill="#f5b813"/></g>
    <!-- Safari -->
    <circle cx="358" cy="1554" r="26.500" fill="#1b8df0" stroke="#e9e9e9" stroke-width="3"/><circle cx="358" cy="1554" r="21" fill="none" stroke="#bfe0ff" stroke-width="3" stroke-dasharray="1 3"/><path d="M377 1536l-23 14 8 8z" fill="#f0443e"/><path d="M340 1573l14-23 8 8z" fill="#f4f4f4"/>
    <!-- Chrome -->
    <circle cx="425.500" cy="1554" r="27" fill="#f9d02e"/><path d="M402 1541a27 27 0 0 1 47 0H425a13 13 0 0 0-12 9z" fill="#e2453a"/><path d="M402 1541a27 27 0 0 0 20 40l12-17a13 13 0 0 1-20-5z" fill="#48a84c"/><circle cx="425.500" cy="1554" r="13" fill="#f4f4f4"/><circle cx="425.500" cy="1554" r="10" fill="#3f87cf"/>
    <!-- Kindle -->
    <rect x="460" y="1522" width="63" height="64" rx="10" fill="#2b5f9f"/><path d="M460 1532q0-10 10-10h43q10 0 10 10v18q-6 6-12 4 0 14 6 32h-10q4-18-2-34-22 3-45-6z" fill="#101a26"/><path d="M482 1586q-2-14 10-22l8 4 2 12-6 6z" fill="#060a10"/><circle cx="494" cy="1562" r="4" fill="#060a10"/><text x="464" y="1546" font-size="24" textLength="56" lengthAdjust="spacingAndGlyphs" fill="#f4b25a">kindle</text>
    <!-- Terminal -->
    <rect x="534" y="1530" width="53" height="48" rx="2" fill="#141414" stroke="#bcbcbc" stroke-width="1.500"/><text x="539" y="1546" font-size="13" font-weight="bold" fill="#eee">&gt;_</text>
    <!-- Mail -->
    <g transform="rotate(-6 626 1553)"><rect x="604" y="1527" width="42" height="54" fill="#fff" stroke="#fff" stroke-width="2" stroke-dasharray="3 2"/><rect x="608" y="1531" width="34" height="46" fill="#5c9ee0"/><path d="M612 1537q9 4 12 12l6-2q2 8 10 12l-8 2-4 6-4-4-6 4q-1-9 2-13-7-8-8-17z" fill="#6b4a2e"/><path d="M624 1547l6-2 3 4-5 3z" fill="#f2f2f2"/></g><circle cx="643" cy="1570" r="12" fill="none" stroke="#75777a" stroke-width="1.500"/><circle cx="643" cy="1570" r="8" fill="none" stroke="#75777a" stroke-width="1"/>
    <!-- Calendar -->
    <g transform="rotate(-4 694 1553)"><rect x="672" y="1529" width="44" height="50" rx="2" fill="#fafafa" stroke="#5c6066" stroke-width="2"/><path d="M672 1529h44v14h-44z" fill="#e4453f"/><text x="694" y="1541" font-size="11" text-anchor="middle" fill="#fff">JUL</text><text x="694" y="1569" font-size="26" text-anchor="middle" fill="#333">19</text></g>
    <!-- Maps -->
    <g transform="rotate(-5 758 1554)"><rect x="737" y="1530" width="44" height="49" fill="#f0ead8" stroke="#fff" stroke-width="2"/><path d="M737 1534h34v8h-34z" fill="#7fc35c"/><path d="M737 1545h30v34" fill="none" stroke="#4f93e8" stroke-width="4"/><path d="M738 1578l26-34" stroke="#f4c430" stroke-width="6"/><path d="M772 1530h9v16h-9z" fill="#f5b8cc"/></g><circle cx="778" cy="1565" r="13" fill="#f2f2f2" stroke="#aaa"/><text x="778" y="1569" font-size="10" text-anchor="middle" fill="#444">3D</text>
    <!-- Notes -->
    <g transform="rotate(-4 829 1553)"><rect x="808" y="1528" width="42" height="53" fill="#fdfdf6"/><path d="M808 1528h42v10h-42z" fill="#fbcb2f"/><path d="M808 1545h42M808 1552h42M808 1559h42M808 1566h42M808 1573h42" stroke="#d4d4cc"/></g>
    <!-- Messages -->
    <path d="M896 1529c16 0 28 10 28 24s-12 24-28 24q-5 0-10-2l-10 5 4-9c-8-4-12-10-12-18 0-14 12-24 28-24z" fill="#35a3f5"/><path d="M904 1551c10 0 17 6 17 14 0 4-2 7-5 9l2 6-7-3c-14 3-24-3-24-12 0-8 7-14 17-14z" fill="#fff"/><g fill="#1d4fa3"><circle cx="896" cy="1565" r="2.500"/><circle cx="904" cy="1565" r="2.500"/><circle cx="912" cy="1565" r="2.500"/></g>
    <!-- FaceTime -->
    <rect x="934" y="1530" width="50" height="45" rx="7" fill="#3bd65a"/><rect x="942" y="1541" width="25" height="22" rx="4" fill="#fff"/><path d="M967 1550l10-7v18l-10-6z" fill="#fff"/><circle cx="976" cy="1564" r="14" fill="#f4f4f4"/><path d="M970 1557c0 8 5 13 12 15l3-4-5-3-2 2q-4-2-4-6l2-2-2-5z" fill="#35c552"/>
    <!-- iPhoto -->
    <g transform="rotate(-6 1026 1550)"><rect x="1004" y="1527" width="46" height="44" fill="#fff"/><rect x="1007" y="1530" width="40" height="38" fill="#3fb6d4"/><path d="M1007 1556h40v12h-40z" fill="#e2d2a3"/><path d="M1030 1536q-16-8-20 8 6-6 14-3-10 4-8 16 4-9 10-12l4 23h5l-5-23q8 2 9 11 4-12-4-15 7-1 11 5-2-14-16-10z" fill="#1b3322"/></g><rect x="1020" y="1556" width="38" height="24" rx="3" fill="#9da1a5"/><circle cx="1040" cy="1568" r="12" fill="#2b2e31"/><circle cx="1040" cy="1568" r="7" fill="#1d6a94"/>
    <!-- App store -->
    <circle cx="1098" cy="1554" r="26.500" fill="url(#blue)" stroke="#dfe9f2" stroke-width="2"/><path d="M1101 1536l-17 32M1095 1536l17 32M1079 1560h38" stroke="#fff" stroke-width="4" fill="none"/><circle cx="1120" cy="1534" r="13" fill="#f4433c"/><text x="1120" y="1540" font-size="16" text-anchor="middle" fill="#fff">3</text>
    <!-- Preferences -->
    <rect x="1137" y="1528" width="54" height="52" rx="2" fill="url(#gray)"/><circle cx="1164" cy="1554" r="20" fill="none" stroke="#33373a" stroke-width="5" stroke-dasharray="3 2"/><circle cx="1164" cy="1554" r="16" fill="#8d9296" stroke="#33373a" stroke-width="4"/><path d="M1164 1554v-16M1164 1554l14 8M1164 1554l-14 8" stroke="#33373a" stroke-width="4"/><circle cx="1164" cy="1554" r="4" fill="#33373a"/>
    <!-- iTunes -->
    <circle cx="1232" cy="1554" r="26" fill="#f8f4fa" stroke="url(#itu)" stroke-width="3.500"/><path d="M1225 1568v-26l18-4v25" fill="none" stroke="url(#itu)" stroke-width="4"/><circle cx="1221" cy="1569" r="5" fill="#b564e0"/><circle cx="1240" cy="1564" r="5" fill="#7d8bef"/>
    <!-- Blender -->
    <path d="M1270 1566l24-19h-19v-6h24l-8-9 6-3 24 20c9 8 8 20-1 26-9 5-22 5-28-3-3-4-4-7-3-12l-16 10z" fill="#f0843a"/><circle cx="1304" cy="1560" r="13" fill="#fff"/><circle cx="1304" cy="1560" r="8" fill="#1d6a9f"/>
    <!-- iBooks -->
    <circle cx="1366" cy="1554" r="26.500" fill="url(#org)" stroke="#f1e7dc" stroke-width="2"/><path d="M1365 1543q-8-5-16-1v26q8-4 16 1zM1367 1543q8-5 16-1v26q-8-4-16 1z" fill="#fff"/>
    <!-- Sublime -->
    <path d="M1410 1527h49l5 50q0 2-2 2h-55q-2 0-2-2z" fill="#d8d8d8"/><path d="M1412 1529h46l2 38h-50z" fill="#585858"/><path d="M1408 1567h54v6h-54z" fill="#1e1e1e"/><text x="1434" y="1559" font-size="30" font-weight="bold" text-anchor="middle" fill="#f79526">S</text>
    <!-- Spotify -->
    <circle cx="1500" cy="1554" r="27" fill="#24d266"/><path d="M1484 1545q18-5 34 5M1486 1554q16-4 29 4M1488 1562q13-3 24 4" fill="none" stroke="#111" stroke-width="5" stroke-linecap="round"/><circle cx="1522" cy="1534" r="13" fill="#f4433c"/><text x="1522" y="1539" font-size="14" text-anchor="middle" fill="#fff">27</text>
    <!-- Xcode -->
    <path d="M1538 1538l48-5 9 36-46 11z" fill="#2f87e0" stroke="#b5dbff"/><path d="M1566 1541l-14 30M1564 1541l18 26M1550 1562l34-5" stroke="#9fd0ff" stroke-width="3"/><path d="M1570 1580l12-46" stroke="#222" stroke-width="5"/><path d="M1570 1528l20-4q7 1 8 8l-7-2-4 5-6-2q-1-4-11-5z" fill="#d6d9dc" stroke="#70757a"/>
    <!-- Eclipse -->
    <ellipse cx="1634" cy="1554" rx="31" ry="31.500" fill="url(#ecl)" stroke="#e4def2"/><path d="M1604 1549h61M1603 1555h62M1605 1561h60" stroke="#fff" stroke-width="2"/><path d="M1612 1540q8-14 24-12-10 4-12 12z" fill="#cfc6e8"/>
    <!-- Arduino -->
    <circle cx="1702" cy="1554" r="29" fill="#12999f"/><g fill="none" stroke="#fff" stroke-width="4"><circle cx="1692" cy="1554" r="8"/><circle cx="1712" cy="1554" r="8"/></g><path d="M1688 1554h7M1709 1554h7M1712 1550.500v7" stroke="#fff" stroke-width="2"/>
    <!-- FileZilla -->
    <rect x="1740" y="1524" width="60" height="60" fill="#b5060c" stroke="#b5060c" stroke-width="4" stroke-dasharray="4 3"/><text x="1764" y="1564" font-size="44" font-weight="bold" font-style="italic" text-anchor="middle" fill="#fff">F</text><text x="1778" y="1576" font-size="44" font-weight="bold" font-style="italic" text-anchor="middle" fill="#fff">z</text>
    <text x="1836" y="1577" font-size="66" text-anchor="middle" textLength="30" lengthAdjust="spacingAndGlyphs" fill="none" stroke="#e0d5c5" stroke-width="2">?</text>
    <!-- Evernote -->
    <rect x="1877" y="1527" width="54" height="54" rx="3" fill="url(#grn)"/><path d="M1896 1536l-9 9h9zM1898 1535v12h-11c1 10 4 14 9 15 4 0 4-4 6-3 2 4 6 2 7 6s-5 1-5 5c1 5 10 4 12-2 4-11 5-21 2-28-3-4-9-2-11-4-2-3-6-2-9-1z" fill="#3b3f3c"/>
    <!-- Firefox -->
    <circle cx="1971" cy="1553" r="28" fill="#2463a8"/><path d="M1946 1533l4 8q8-5 12-2-4 4 1 8l7 2-8 8q2 8 12 7 10-2 13-9 4-14-6-26 20 10 19 26-3 26-30 28-26-2-29-26 0-12 5-24z" fill="#ea6a1e"/><path d="M1987 1529q18 14 11 34-6 14-22 18 20-18 11-52z" fill="#fbc52a"/>
    <!-- Skype -->
    <path d="M2012 1540c0-14 12-18 20-13 20-2 34 12 33 30 5 14-7 30-22 24-18 1-29-9-29-26q-3-8-2-15z" fill="#20abea"/><text x="2038" y="1572" font-size="50" font-weight="bold" text-anchor="middle" fill="#fff">S</text>
    <!-- Java -->
    <rect x="2081" y="1527" width="50" height="53" rx="2" fill="#f6f6f6" stroke="#7b8690" stroke-width="1.500"/><path d="M2107 1533q8 8-1 14t1 11M2113 1542q-8 5-4 12" fill="none" stroke="#ec8a2c" stroke-width="3"/><path d="M2096 1560q10 3 20 0M2098 1565q8 3 16 0M2093 1571q12 4 26 0M2117 1561q7 0 0 6" fill="none" stroke="#4b7d9b" stroke-width="2.500"/>
    <path d="M2155 1526v62" stroke="#7c6b4f" stroke-width="2"/>
    <!-- Document, minimised windows, trash -->
    <path d="M2182 1524h26l15 16v43h-43z" fill="#f4f4f4"/><path d="M2200 1523l22 24-18-6z" fill="#d8d8d8"/><path d="M2182 1530v52" stroke="#222" stroke-width="4" stroke-dasharray="2 2"/><path d="M2188 1546h28M2198 1536h8" stroke="#bbb"/>
    <rect x="2240" y="1537" width="60" height="34" fill="#f5f7f8"/><path d="M2240 1539h60M2242 1545h18M2242 1550h12M2242 1555h14M2242 1560h12M2264 1544h22M2288 1550h10M2264 1552h14" stroke="#b5bcc2" stroke-width="1.500"/><rect x="2280" y="1563" width="19" height="19" fill="url(#blue)"/><path d="M2290 1563h9v19h-8z" fill="#eee"/><path d="M2283 1575q6 4 12 0" stroke="#123" fill="none"/>
    <rect x="2307" y="1536" width="62" height="35" fill="#25221f" stroke="#a3a3a3" stroke-width="2"/><path d="M2308 1558q25-14 60-16v-5h-60z" fill="#434240"/>
    <rect x="2374" y="1537" width="60" height="34" fill="#f7f7f9"/><path d="M2374 1539h60M2380 1545h30M2380 1550h18M2380 1555h26M2380 1560h16M2380 1565h22" stroke="#c4a8d0" stroke-width="1.500"/><circle cx="2423" cy="1572" r="11" fill="#2463a8"/><path d="M2413 1565q3 8 10 8t8-8q4 6 3 10-3 9-12 9-11-2-11-11 0-4 2-8z" fill="#ea6a1e"/>
    <path d="M2450 1533h44l-5 46q-1 4-6 4h-22q-5 0-6-4z" fill="#dedede"/><ellipse cx="2472" cy="1533" rx="22" ry="5" fill="#b7b7b7"/><path d="M2455 1534l8-10 6 6 6-7 7 8 6 2q-16 6-33 1z" fill="#f5f5f5"/><path d="M2464 1530l4-4 3 6z" fill="#2b5f80"/><path d="M2480 1527l3 5h-6z" fill="#d9663a"/><path d="M2462 1542l3 36M2472 1542v36M2482 1542l-3 36" stroke="#c2c2c2" stroke-width="2"/>
  </svg>
</nav>
</div>
<script>
// Set tracking so each label takes the width stored in data-w.
// Measured on a range over the label's text, at normal tracking; repeated as styles and fonts settle.
function fitLabels() {
  var els = Array.from(document.querySelectorAll('[data-w]'));
  els.forEach(function (el) { el.style.letterSpacing = '0px'; });
  var widths = els.map(function (el) {
    var r = document.createRange();
    r.selectNodeContents(el);
    return r.getBoundingClientRect().width;
  });
  els.forEach(function (el, i) {
    el.style.letterSpacing = ((+el.dataset.w - widths[i]) / el.textContent.length) + 'px';
  });
}
fitLabels();
window.addEventListener('load', fitLabels);
document.fonts.ready.then(fitLabels);
[30, 100, 250, 500].forEach(function (t) { setTimeout(fitLabels, t); });
</script>
</body>
</html>
